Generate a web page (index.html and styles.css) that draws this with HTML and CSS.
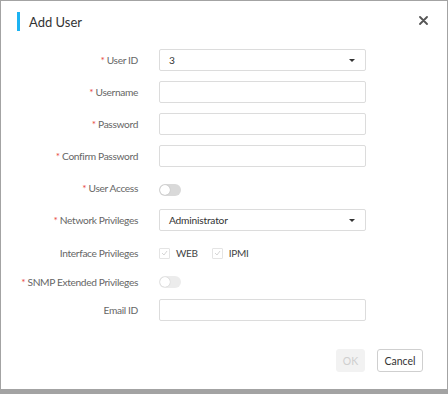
FILE: index.html
```html
<!DOCTYPE html>
<html lang="en">
<head>
  <meta charset="UTF-8" />
  <meta name="viewport" content="width=device-width, initial-scale=1.0" />
  <title>Add User</title>
  <link rel="stylesheet" href="styles.css">
</head>
<body>
  <div class="dialog">
    <div class="dialog-header">
      <span class="bar"></span>
      <h2>Add User</h2>
      <span class="close">
        <svg width="9" height="9" viewBox="0 0 9 9"><path d="M1 1L8 8M8 1L1 8" stroke="#555" stroke-width="1.8" stroke-linecap="round"/></svg>
      </span>
    </div>

    <div class="form">
      <label class="req">User ID</label>
      <div class="field select"><span>3</span><i class="caret"></i></div>

      <label class="req">Username</label>
      <div class="field"></div>

      <label class="req">Password</label>
      <div class="field"></div>

      <label class="req">Confirm Password</label>
      <div class="field"></div>

      <label class="req">User Access</label>
      <div class="row-toggle"><span class="toggle"></span></div>

      <label class="req">Network Privileges</label>
      <div class="field select"><span>Administrator</span><i class="caret"></i></div>

      <label>Interface Privileges</label>
      <div class="row-check">
        <span class="check"><i class="box"><svg width="7" height="6" viewBox="0 0 7 6"><path d="M1 3L3 5L6 1" fill="none" stroke="#d6d6d6" stroke-width="1"/></svg></i>WEB</span>
        <span class="check"><i class="box"><svg width="7" height="6" viewBox="0 0 7 6"><path d="M1 3L3 5L6 1" fill="none" stroke="#d6d6d6" stroke-width="1"/></svg></i>IPMI</span>
      </div>

      <label class="req">SNMP Extended Privileges</label>
      <div class="row-snmp"><span class="toggle disabled"></span></div>

      <label>Email ID</label>
      <div class="field"></div>
    </div>

    <div class="footer">
      <button class="btn ok" disabled>OK</button>
      <button class="btn">Cancel</button>
    </div>
  </div>
</body>
</html>
```

FILE: styles.css
```css
* {
  box-sizing: border-box;
}
html, body {
  height: 100%;
}
body {
  margin: 0;
  padding: 1px 1px 5px 1px;
  background: #a3a3a3;
  font-family: 'Lato', sans-serif;
  color: #555;
}
.dialog {
  background: #fff;
  height: 100%;
}
.dialog-header {
  display: flex;
  align-items: center;
  height: 41px;
  padding: 0 16px;
}
.bar {
  width: 3px;
  height: 19px;
  background: #1cb3f2;
  margin-right: 9px;
}
.dialog-header h2 {
  margin: 0;
  font-size: 13px;
  font-weight: normal;
  color: #333;
  flex: 1;
}
.close {
  display: flex;
  margin-right: 3px;
  margin-top: -3px;
}
.form {
  display: grid;
  grid-template-columns: 137px 207px;
  column-gap: 21px;
  row-gap: 10px;
  padding-top: 7px;
  align-items: center;
}
.form label {
  text-align: right;
  font-size: 10.2px;
  letter-spacing: -0.35px;
  color: #666;
  white-space: nowrap;
}
.req::before {
  content: "* ";
  color: #e8493f;
}
.field {
  height: 22px;
  border: 1px solid #dcdcdc;
  border-radius: 2px;
  display: flex;
  align-items: center;
  padding: 0 9px;
  font-size: 10.2px;
  letter-spacing: -0.2px;
  color: #333;
}
.select span {
  flex: 1;
}
.caret {
  width: 0;
  height: 0;
  border-left: 3px solid transparent;
  border-right: 3px solid transparent;
  border-top: 3px solid #333;
  margin-right: 1px;
}
.row-toggle {
  height: 22px;
  padding-top: 3px;
  display: flex;
  align-items: center;
}
.row-check {
  height: 24px;
  display: flex;
  align-items: center;
  gap: 14px;
}
.row-snmp {
  height: 14px;
  display: flex;
  align-items: center;
}
.toggle {
  width: 22px;
  height: 12px;
  border-radius: 6px;
  background: #d9d9d9;
  position: relative;
}
.toggle::after {
  content: "";
  position: absolute;
  left: 1px;
  top: 1px;
  width: 10px;
  height: 10px;
  border-radius: 50%;
  background: #fff;
  box-shadow: 0 0 1px rgba(0,0,0,0.3);
}
.toggle.disabled {
  background: #ececec;
}
.check {
  display: flex;
  align-items: center;
  font-size: 10px;
  letter-spacing: -0.3px;
  color: #444;
}
.box {
  width: 11px;
  height: 11px;
  border: 1px solid #e4e4e4;
  border-radius: 1px;
  display: flex;
  align-items: center;
  justify-content: center;
  margin-right: 6px;
}
.footer {
  display: flex;
  justify-content: flex-end;
  gap: 12px;
  padding: 28px 24px 0 0;
}
.btn {
  height: 23px;
  width: 46px;
  padding: 0;
  font-family: 'Lato', sans-serif;
  font-size: 10.5px;
  color: #333;
  background: #fff;
  border: 1px solid #cfcfcf;
  border-radius: 3px;
}
.btn.ok {
  width: 29px;
  background: #f2f2f2;
  border-color: #f2f2f2;
  color: #cfcfcf;
}
```
